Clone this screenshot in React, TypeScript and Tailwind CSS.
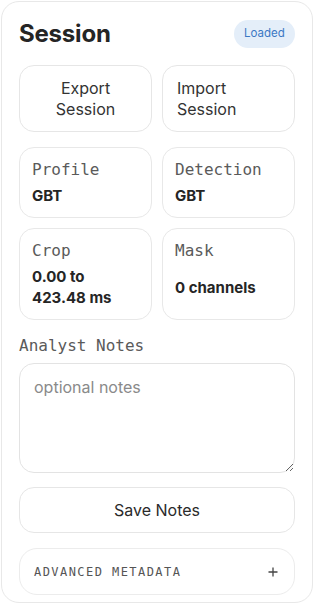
import React from "react";

export default function App() {
  return (
    <div className="min-h-screen bg-white p-px font-[Inter,'Noto_Sans',sans-serif] text-[#222]">
      <div className="flex w-[312px] flex-col rounded-[18px] border border-[#e8e8e8] px-[17px] pt-[17px] pb-[7px]">
        <div className="flex h-[30px] items-center justify-between">
          <h1 className="text-[24px] font-bold leading-[30px] tracking-[-0.2px] text-[#252525]">Session</h1>
          <span className="flex h-[28px] w-[61px] items-center justify-center rounded-full bg-[#e4eef9] text-[11.5px] text-[#3b78c4]">
            Loaded
          </span>
        </div>

        <div className="mt-[16px] grid grid-cols-2 gap-[10px]">
          <button className="flex h-[67px] items-center justify-center rounded-[15px] border border-[#e6e6e6] bg-white text-center text-[16px] leading-[21px] text-[#333]">
            Export
            <br />
            Session
          </button>
          <button className="flex h-[67px] items-center justify-start rounded-[15px] border border-[#e6e6e6] bg-white px-[14px] text-left text-[16px] leading-[21px] text-[#333]">
            Import
            <br />
            Session
          </button>
        </div>

        <div className="mt-[15px] grid grid-cols-2 gap-[10px]">
          <Card label="Profile" value="GBT" />
          <Card label="Detection" value="GBT" />
          <Card label="Crop" value={<>0.00 to<br />423.48 ms</>} />
          <Card label="Mask" value="0 channels" center />
        </div>

        <label className="mt-[14px] font-['DejaVu_Sans_Mono',monospace] text-[16px] leading-[24px] text-[#5a5a5a]">
          Analyst Notes
        </label>
        <textarea
          placeholder="optional notes"
          className="mt-[5px] h-[110px] w-full rounded-[15px] border border-[#e3e3e3] px-[14px] py-[12px] text-[16px] leading-[22px] text-[#333] outline-none placeholder:text-[#8a8a8a]"
        />

        <button className="mt-[14px] flex h-[46px] items-center justify-center rounded-[15px] border border-[#e6e6e6] bg-white text-[16px] text-[#2a2a2a]">
          Save Notes
        </button>

        <div className="mt-[15px] flex h-[47px] items-center justify-between rounded-[18px] border border-[#ececec] pl-[14px] pr-[16px]">
          <span className="font-['DejaVu_Sans_Mono',monospace] text-[12px] leading-[16px] tracking-[0.12em] text-[#555]">ADVANCED METADATA</span>
          <svg width="10" height="10" viewBox="0 0 10 10" className="text-[#444]">
            <path d="M5 0.5V9.5M0.5 5H9.5" stroke="currentColor" strokeWidth="1.3" />
          </svg>
        </div>
      </div>
    </div>
  );
}

function Card({ label, value, center }: { label: string; value: React.ReactNode; center?: boolean }) {
  return (
    <div className="flex flex-col rounded-[15px] border border-[#e8e8e8] px-[12px] pt-[12px] pb-[11px]">
      <div className="font-['DejaVu_Sans_Mono',monospace] text-[16px] leading-[20px] text-[#5a5a5a]">{label}</div>
      <div className={`mt-[5px] text-[15px] font-bold leading-[21px] text-[#252525] ${center ? "flex flex-1 items-center" : ""}`}>
        {value}
      </div>
    </div>
  );
}
